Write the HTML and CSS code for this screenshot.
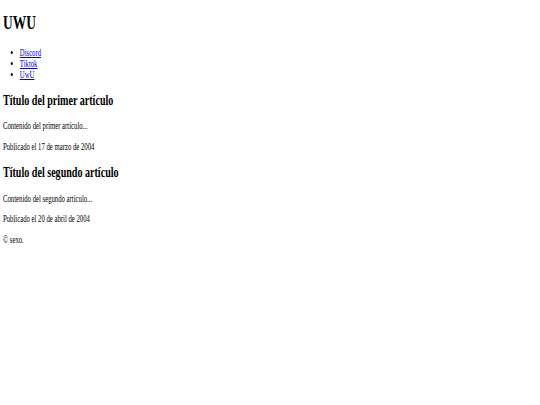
FILE: index.html
```html
<!DOCTYPE html>
<html lang="es">
<head>
<meta charset="utf-8">
<title>UWU</title>
<link rel="stylesheet" href="styles.css">
</head>
<body class="page">
  <header class="site-header">
    <h1 class="site-title">UWU</h1>
    <nav class="site-nav">
      <ul class="nav-list">
        <li><a href="#">Discord</a></li>
        <li><a href="#">Tiktok</a></li>
        <li><a href="#">UwU</a></li>
      </ul>
    </nav>
  </header>
  <main class="content">
    <article class="post">
      <h2 class="post-title">Título del primer artículo</h2>
      <p class="post-body">Contenido del primer artículo...</p>
      <p class="post-date">Publicado el 17 de marzo de 2004</p>
    </article>
    <article class="post">
      <h2 class="post-title">Título del segundo artículo</h2>
      <p class="post-body">Contenido del segundo artículo...</p>
      <p class="post-date">Publicado el 20 de abril de 2004</p>
    </article>
  </main>
  <footer class="site-footer">
    <p class="copyright">© sexo.</p>
  </footer>
</body>
</html>
```
FILE: styles.css
```css
/* Plain document look: serif text, browser-like spacing, narrow glyphs */
html {
  background: #fff;
}

.page {
  margin: 0 0 0 3.4px;
  padding: 0;
  font-family: "Liberation Serif", "Times New Roman", serif;
  font-size: 9.6px;
  line-height: 1.15;
  color: #000;
  transform: scaleX(0.7);
  transform-origin: 0 0;
}

.site-title {
  font-size: 2em;
  font-weight: bold;
  margin: 12px 0 12.86px;
}

.nav-list {
  margin: 9.6px 0;
  padding-left: 24px;
  list-style: disc;
}

.nav-list a {
  color: #0000ee;
  text-decoration: underline;
}

.post-title {
  font-size: 1.5em;
  font-weight: bold;
  margin: 0.83em 0;
}

.post-body,
.post-date,
.copyright {
  margin: 9.6px 0;
}
```
